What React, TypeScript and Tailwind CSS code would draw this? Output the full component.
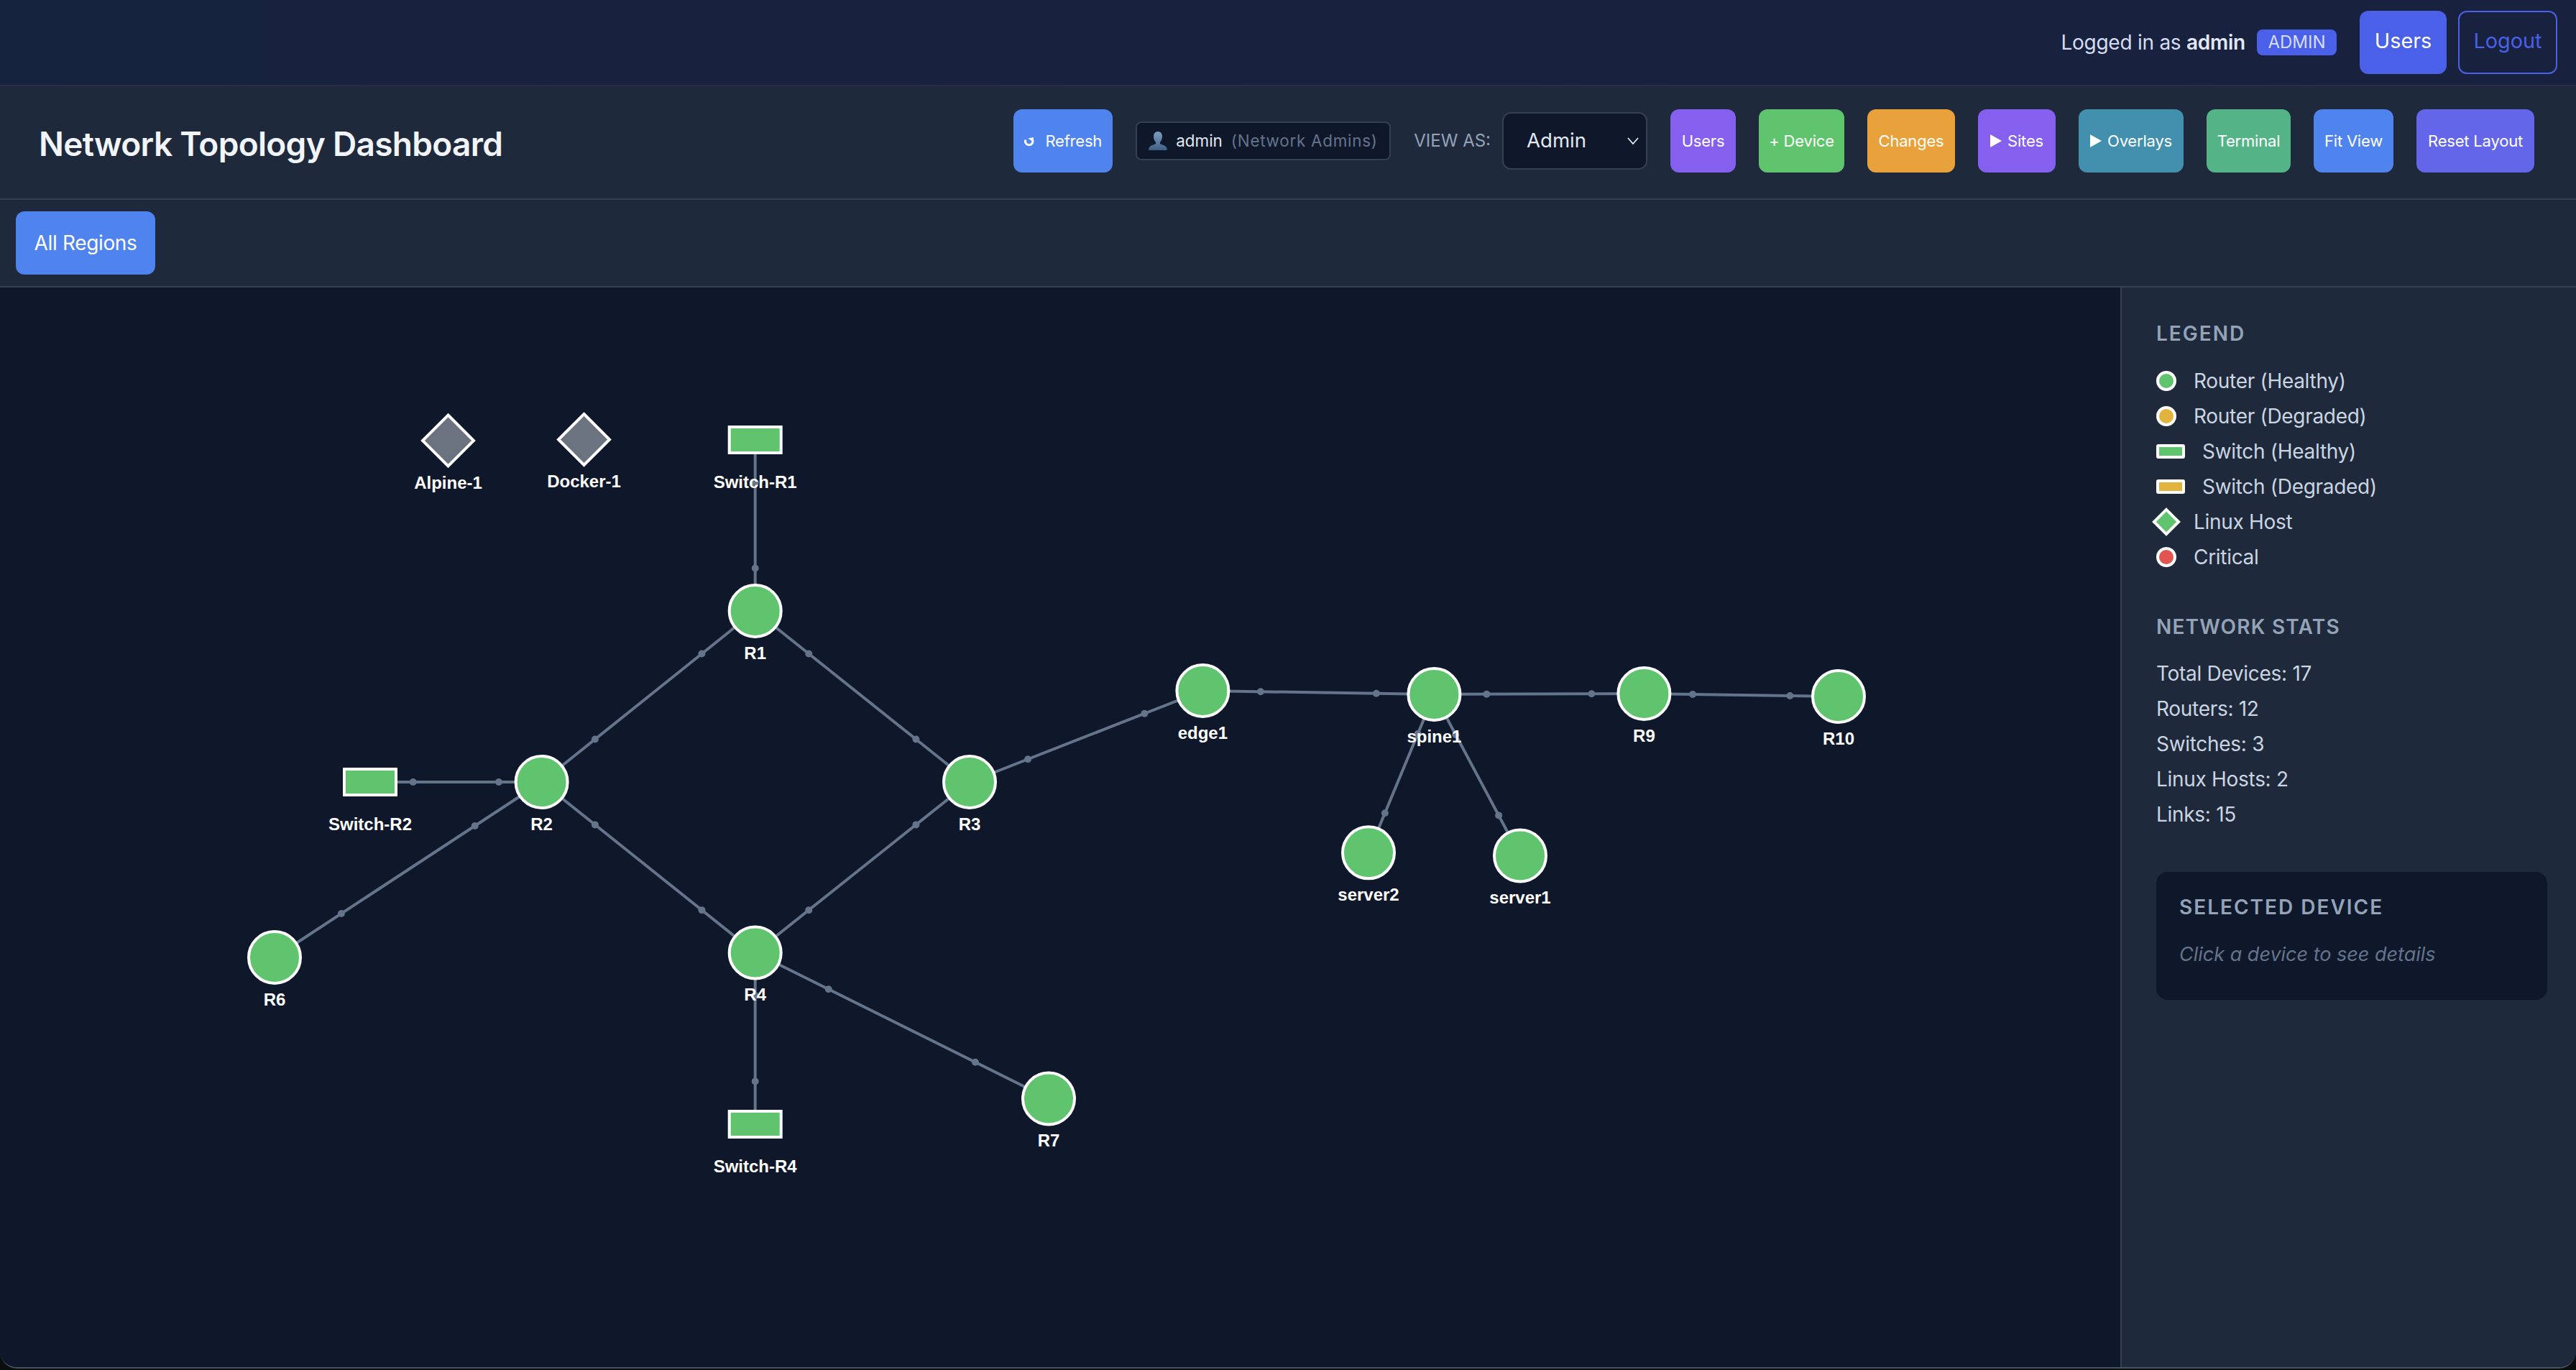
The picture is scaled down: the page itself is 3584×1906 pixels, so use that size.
import { type ReactNode } from "react";

type DeviceKind = "router" | "switch" | "host";

interface Device {
  id: string;
  kind: DeviceKind;
  x: number;
  y: number;
}

const devices: Device[] = [
  { id: "Alpine-1", kind: "host", x: 623.5, y: 613 },
  { id: "Docker-1", kind: "host", x: 812.5, y: 611.5 },
  { id: "Switch-R1", kind: "switch", x: 1050.7, y: 612 },
  { id: "R1", kind: "router", x: 1050.7, y: 850 },
  { id: "R2", kind: "router", x: 753.6, y: 1088 },
  { id: "R3", kind: "router", x: 1349, y: 1088 },
  { id: "R4", kind: "router", x: 1050.7, y: 1325.5 },
  { id: "R6", kind: "router", x: 382, y: 1332 },
  { id: "R7", kind: "router", x: 1459, y: 1528.5 },
  { id: "Switch-R2", kind: "switch", x: 515, y: 1088 },
  { id: "Switch-R4", kind: "switch", x: 1050.7, y: 1564 },
  { id: "edge1", kind: "router", x: 1673.4, y: 961 },
  { id: "spine1", kind: "router", x: 1995.4, y: 966 },
  { id: "R9", kind: "router", x: 2287.4, y: 965 },
  { id: "R10", kind: "router", x: 2558, y: 969 },
  { id: "server2", kind: "router", x: 1904, y: 1186.3 },
  { id: "server1", kind: "router", x: 2115, y: 1190.5 },
];

const links: [string, string][] = [
  ["Switch-R1", "R1"],
  ["R1", "R2"],
  ["R1", "R3"],
  ["R2", "Switch-R2"],
  ["R2", "R4"],
  ["R2", "R6"],
  ["R3", "R4"],
  ["R3", "edge1"],
  ["R4", "Switch-R4"],
  ["R4", "R7"],
  ["edge1", "spine1"],
  ["spine1", "R9"],
  ["R9", "R10"],
  ["spine1", "server2"],
  ["spine1", "server1"],
];

const byId = (id: string) => devices.find((d) => d.id === id)!;

function Topology() {
  return (
    <svg width={2950} height={1504} viewBox="0 400 2950 1504" className="block">
      {links.map(([a, b]) => {
        const s = byId(a);
        const t = byId(b);
        return (
          <g key={a + b} fill="#64748b">
            <line x1={s.x} y1={s.y} x2={t.x} y2={t.y} stroke="#64748b" strokeWidth={4} />
            <circle cx={s.x + (t.x - s.x) * 0.25} cy={s.y + (t.y - s.y) * 0.25} r={5} />
            <circle cx={s.x + (t.x - s.x) * 0.75} cy={s.y + (t.y - s.y) * 0.75} r={5} />
          </g>
        );
      })}
      {devices.map((d) => (
        <g key={d.id}>
          {d.kind === "router" && (
            <circle cx={d.x} cy={d.y} r={36} fill="#5fc46d" stroke="#ffffff" strokeWidth={4} />
          )}
          {d.kind === "switch" && (
            <rect x={d.x - 36} y={d.y - 18} width={72} height={36} fill="#5fc46d" stroke="#ffffff" strokeWidth={4} />
          )}
          {d.kind === "host" && (
            <polygon
              points={`${d.x},${d.y - 35.5} ${d.x + 35.5},${d.y} ${d.x},${d.y + 35.5} ${d.x - 35.5},${d.y}`}
              fill="#6b7280"
              stroke="#ffffff"
              strokeWidth={4}
            />
          )}
          <text
            x={d.x}
            y={d.y + 66.5}
            textAnchor="middle"
            fill="#ffffff"
            fontSize={24}
            fontWeight={700}
            fontFamily="Liberation Sans, sans-serif"
          >
            {d.id}
          </text>
        </g>
      ))}
    </svg>
  );
}

function ToolButton({ className, children }: { className: string; children: ReactNode }) {
  return (
    <button className={`h-[88px] px-4 rounded-xl text-white text-[22px] tracking-[-0.2px] flex items-center justify-center gap-2 whitespace-nowrap ${className}`}>
      {children}
    </button>
  );
}

function PlayIcon() {
  return (
    <svg width={16} height={18} viewBox="0 0 16 18" className="shrink-0">
      <polygon points="0,0 16,9 0,18" fill="#ffffff" />
    </svg>
  );
}

function RefreshIcon() {
  return (
    <svg width={14} height={14} viewBox="0 0 14 14" fill="none" className="shrink-0 translate-y-[2px]">
      <path d="M2 3.500 A5.200 5.200 0 1 0 11.800 4.500" stroke="#ffffff" strokeWidth={3} />
      <polygon points="5.500,1.600 13,0 13,7" fill="#ffffff" />
    </svg>
  );
}

function BustIcon() {
  return (
    <svg width={26} height={26} viewBox="0 0 26 26" className="shrink-0">
      <defs>
        <linearGradient id="bust" x1="0" y1="0" x2="0" y2="1">
          <stop offset="0" stopColor="#7f9fc2" />
          <stop offset="1" stopColor="#3e5f85" />
        </linearGradient>
      </defs>
      <path
        d="M13 0c4 0 6 3 6 7 0 3-1.200 6-3 8v2c1 1 7 2 9 5 .7 1.500.8 3 .8 4H.2c0-1 .1-2.500.8-4 2-3 8-4 9-5v-2c-1.800-2-3-5-3-8 0-4 2-7 6-7z"
        fill="url(#bust)"
      />
    </svg>
  );
}

function LegendRow({ icon, label }: { icon: ReactNode; label: string }) {
  return (
    <div className="flex items-center gap-6 h-[49px] text-[28px] tracking-[-0.3px] text-[#cbd5e1]">
      {icon}
      <span>{label}</span>
    </div>
  );
}

const dot = "w-7 h-7 rounded-full border-4 border-white shrink-0";
const bar = "w-10 h-5 rounded-[3px] border-4 border-white shrink-0";
const heading = "text-[28px] leading-[34px] font-semibold text-[#94a3b8]";

const stats = ["Total Devices: 17", "Routers: 12", "Switches: 3", "Linux Hosts: 2", "Links: 15"];

export default function App() {
  return (
    <div className="w-full h-[1906px] bg-[#0a0e0c] overflow-hidden font-[family-name:Inter,sans-serif]">
      <div className="h-[1904px] flex flex-col overflow-hidden rounded-b-[24px] border-b-2 border-[#4a5160] bg-[#0f172a]">
        <div className="h-[120px] shrink-0 flex items-center justify-end gap-4 pr-[26px] border-b-2 border-[#2c2a45] bg-gradient-to-r from-[#16233f] to-[#18213e]">
          <div className="text-[28px] tracking-[-0.25px] text-[#d5dcf0] whitespace-nowrap">
            Logged in as <b className="font-semibold text-[#e2e8f8]">admin</b>
          </div>
          <span className="h-9 w-[111px] rounded-lg bg-[#4a60e8] text-[#d5dcf8] text-[24px] flex items-center justify-center">
            ADMIN
          </span>
          <div className="flex gap-4 ml-4">
            <button className="h-[88px] w-[121px] rounded-xl bg-[#4a60e8] text-white text-[28.8px] flex items-center justify-center pb-1">
              Users
            </button>
            <button className="h-[88px] w-[138px] rounded-xl border-2 border-[#4a60e8] text-[#4a60e8] text-[28.8px] flex items-center justify-center pb-1">
              Logout
            </button>
          </div>
        </div>

        <div className="h-[158px] shrink-0 flex items-center justify-between pl-[54px] pr-[58px] border-b-2 border-[#334155] bg-[#1e293b]">
          <h1 className="mt-1 text-[46px] tracking-[-0.7px] font-semibold text-[#f1f5f9] whitespace-nowrap">
            Network Topology Dashboard
          </h1>
          <div className="mb-1 flex items-center gap-8">
            <ToolButton className="w-[138px] !gap-[15px] bg-[#4f83ee]">
              <RefreshIcon />
              Refresh
            </ToolButton>
            <div className="h-[54px] w-[355px] rounded-lg border-2 border-[#334155] bg-[#0f172a] flex items-center gap-3 pl-4 text-[22.4px] whitespace-nowrap">
              <BustIcon />
              <span className="text-[#e2e8f0]">admin</span>
              <span className="text-[#64748b] tracking-[0.75px]">(Network Admins)</span>
            </div>
            <div className="flex items-center gap-4">
              <span className="text-[24px] text-[#94a3b8] whitespace-nowrap">VIEW AS:</span>
              <div className="h-20 w-[202px] rounded-xl border-2 border-[#334155] bg-[#0f172a] flex items-center justify-between pl-8 pr-[10px] text-[27.6px] text-[#e2e8f0]">
                Admin
                <svg width={16} height={10} viewBox="0 0 16 10" fill="none">
                  <path d="M1 1l7 8 7-8" stroke="#e2e8f0" strokeWidth={1.800} />
                </svg>
              </div>
            </div>
            <ToolButton className="w-[91px] bg-[#8560ee]">Users</ToolButton>
            <ToolButton className="w-[119px] bg-[#5fc46d]">+ Device</ToolButton>
            <ToolButton className="w-[122px] bg-[#e9a23b]">Changes</ToolButton>
            <ToolButton className="w-[108px] bg-[#8560ee]">
              <PlayIcon />
              Sites
            </ToolButton>
            <ToolButton className="w-[146px] bg-[#4290ae]">
              <PlayIcon />
              Overlays
            </ToolButton>
            <ToolButton className="w-[117px] bg-[#54b487]">Terminal</ToolButton>
            <ToolButton className="w-[111px] bg-[#4f83ee]">Fit View</ToolButton>
            <ToolButton className="w-[164px] bg-[#6366e8]">Reset Layout</ToolButton>
          </div>
        </div>

        <div className="h-[122px] shrink-0 flex items-center pl-[22px] border-b-2 border-[#334155] bg-[#1e293b]">
          <button className="h-[88px] w-[194px] rounded-xl bg-[#4f83ee] text-white text-[28px] tracking-[-0.35px]">
            All Regions
          </button>
        </div>

        <div className="flex-1 flex min-h-0">
          <div className="w-[2950px] shrink-0 bg-[#0f172a]">
            <Topology />
          </div>
          <aside className="flex-1 border-l-2 border-[#334155] bg-[#1e293b] pl-[48px] pr-[40px] pt-[47px]">
            <h3 className={`${heading} tracking-[2px]`}>LEGEND</h3>
            <div className="mt-[24.5px] flex flex-col">
              <LegendRow icon={<span className={`${dot} bg-[#5fc46d]`} />} label="Router (Healthy)" />
              <LegendRow icon={<span className={`${dot} bg-[#e2b33f]`} />} label="Router (Degraded)" />
              <LegendRow icon={<span className={`${bar} bg-[#5fc46d]`} />} label="Switch (Healthy)" />
              <LegendRow icon={<span className={`${bar} bg-[#e2b33f]`} />} label="Switch (Degraded)" />
              <LegendRow icon={<span className={`${dot} !rounded-none rotate-45 bg-[#5fc46d]`} />} label="Linux Host" />
              <LegendRow icon={<span className={`${dot} bg-[#e25550]`} />} label="Critical" />
            </div>
            <h3 className={`${heading} tracking-[1.2px] mt-[55px]`}>NETWORK STATS</h3>
            <div className="mt-[24px] flex flex-col text-[28px] tracking-[-0.3px] text-[#cbd5e1]">
              {stats.map((s) => (
                <div key={s} className="h-[49px] leading-[49px]">
                  {s}
                </div>
              ))}
            </div>
            <div className="mt-[55.5px] h-[178px] rounded-2xl bg-[#0f172a] pl-8 pt-8">
              <h3 className={`${heading} tracking-[2px]`}>SELECTED DEVICE</h3>
              <p className="mt-[29px] text-[27px] italic text-[#64748b]">Click a device to see details</p>
            </div>
          </aside>
        </div>
      </div>
    </div>
  );
}
